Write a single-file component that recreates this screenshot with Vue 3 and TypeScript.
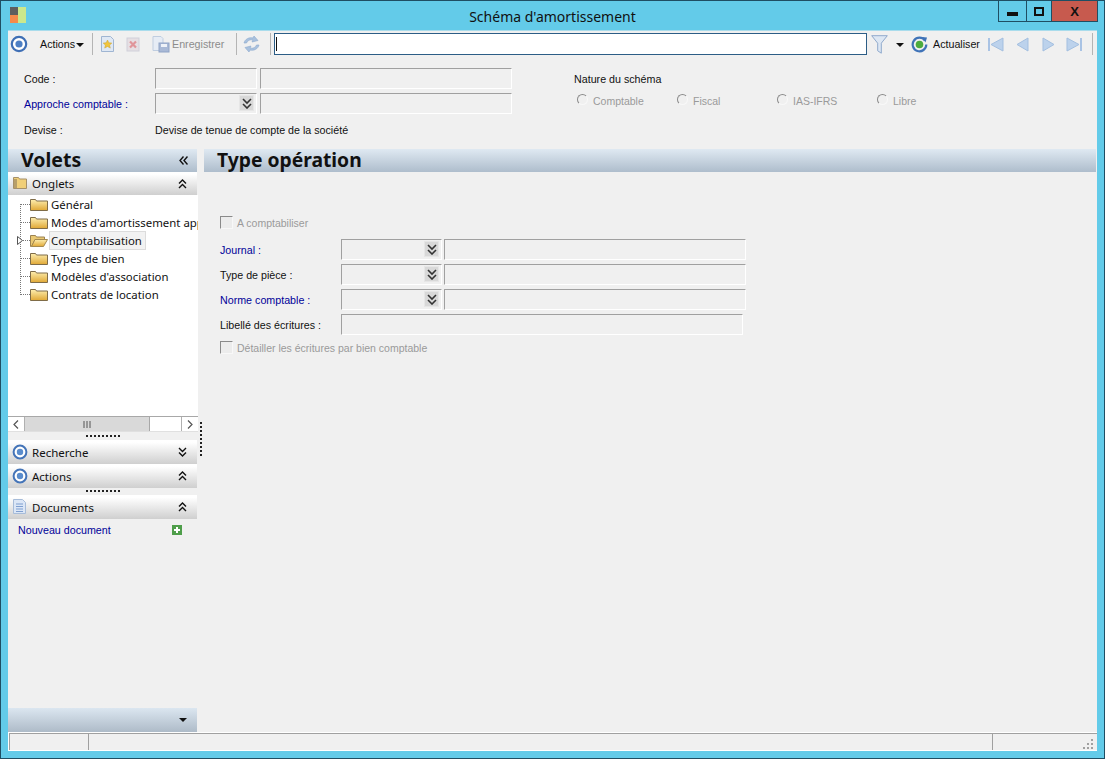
<script setup lang="ts">
const tree = [
  { label: "Général", open: false },
  { label: "Modes d'amortissement app", open: false },
  { label: "Comptabilisation", open: true },
  { label: "Types de bien", open: false },
  { label: "Modèles d'association", open: false },
  { label: "Contrats de location", open: false },
];
const radios = ["Comptable", "Fiscal", "IAS-IFRS", "Libre"];
const comboRows = [
  { label: "Journal :", link: true },
  { label: "Type de pièce :", link: false },
  { label: "Norme comptable :", link: true },
];
</script>

<template>
  <div class="window">
    <header class="titlebar">
      <svg class="logo" width="16" height="16" viewBox="0 0 16 16">
        <rect x="0" y="0" width="8" height="8" fill="#5e5e5e" />
        <rect x="0" y="8" width="8" height="8" fill="#f58a4b" />
        <rect x="8" y="0" width="8" height="16" fill="#cbe88c" />
      </svg>
      <h1 class="title">Schéma d'amortissement</h1>
      <div class="controls">
        <button class="ctl ctl-min"><span></span></button>
        <button class="ctl ctl-max"><span></span></button>
        <button class="ctl ctl-close">X</button>
      </div>
    </header>

    <div class="client">
      <div class="toolbar">
        <svg class="ring tb-ring" width="18" height="18" viewBox="0 0 18 18">
          <circle cx="9" cy="9" r="7.2" fill="#fff" stroke="#3f6fb5" stroke-width="2.2" />
          <circle cx="9" cy="9" r="3.6" fill="#4d7fc4" />
        </svg>
        <span class="tb-actions">Actions</span><i class="caret"></i>
        <i class="sep sep-a"></i>
        <svg class="tb-new" width="15" height="16" viewBox="0 0 15 16">
          <path d="M1.500 .5h9l3 3v12h-12z" fill="#dfe8f4" stroke="#9fb5d2" />
          <path d="M7.500 4l1.300 2.800 3 .3-2.200 2 .7 3-2.800-1.600-2.800 1.600.7-3-2.200-2 3-.3z" fill="#f2c53a" stroke="#c9a02e" stroke-width=".5" />
        </svg>
        <svg class="tb-del" width="14" height="15" viewBox="0 0 14 15">
          <rect x="1" y="1" width="12" height="13" fill="#e6dfe3" stroke="#cfd0da" />
          <path d="M4 4.500l6 6M10 4.500l-6 6" stroke="#e0959a" stroke-width="2.200" />
        </svg>
        <svg class="tb-save" width="18" height="17" viewBox="0 0 18 17">
          <path d="M1 .5h8l2 2v12H1z" fill="#e6ecf5" stroke="#bfcde0" />
          <rect x="7" y="7" width="10" height="9" fill="#a9b9d6" stroke="#8fa3c6" />
          <rect x="9" y="8" width="6" height="3" fill="#eef2f8" />
        </svg>
        <span class="tb-save-label">Enregistrer</span>
        <i class="sep sep-b"></i>
        <svg class="tb-sync" width="19" height="18" viewBox="0 0 19 18">
          <path d="M2 8c1-4 5-6 9-5l1-2 4 4.500-6 1.500 1-2c-3-.8-5.500 .5-6.500 3z" fill="#a9c1de" stroke="#8aa8cd" stroke-width=".6" />
          <path d="M17 10c-1 4-5 6-9 5l-1 2-4-4.500 6-1.500-1 2c3 .8 5.500-.5 6.500-3z" fill="#a9c1de" stroke="#8aa8cd" stroke-width=".6" />
        </svg>
        <i class="sep sep-c"></i>
        <div class="search"><i class="cursor"></i></div>
        <svg class="tb-filter" width="17" height="19" viewBox="0 0 17 19">
          <path d="M.7 .7h15.600l-6 7.500v10l-3.600-2.400V8.200z" fill="#dde7f3" stroke="#8fa9cc" />
        </svg>
        <i class="caret caret-filter"></i>
        <svg class="tb-refresh" width="17" height="17" viewBox="0 0 17 17">
          <path d="M14 4.500a6.800 6.800 0 1 0 1.300 4" fill="none" stroke="#3f73b8" stroke-width="2.200" />
          <path d="M11 1l5 .5-1.500 5z" fill="#3f73b8" />
          <circle cx="8.500" cy="8.500" r="3.800" fill="#4cab3e" />
        </svg>
        <span class="tb-refresh-label">Actualiser</span>
        <svg class="nav nav-first" width="16" height="15" viewBox="0 0 16 15">
          <path d="M1 1v13" stroke="#a9c3e4" stroke-width="2" />
          <path d="M15 1v13L3 7.500z" fill="#bcd2ec" stroke="#a3bfe0" />
        </svg>
        <svg class="nav nav-prev" width="13" height="15" viewBox="0 0 13 15">
          <path d="M12 1v13L1 7.500z" fill="#bcd2ec" stroke="#a3bfe0" />
        </svg>
        <svg class="nav nav-next" width="13" height="15" viewBox="0 0 13 15">
          <path d="M1 1v13l11-6.500z" fill="#bcd2ec" stroke="#a3bfe0" />
        </svg>
        <svg class="nav nav-last" width="16" height="15" viewBox="0 0 16 15">
          <path d="M15 1v13" stroke="#a9c3e4" stroke-width="2" />
          <path d="M1 1v13l12-6.500z" fill="#bcd2ec" stroke="#a3bfe0" />
        </svg>
        <i class="sep sep-d"></i>
      </div>

      <section class="head-form">
        <div class="head-left">
          <div class="row">
            <label class="head-label">Code :</label>
            <div class="field f-102"></div>
            <div class="field f-252"></div>
          </div>
          <div class="row">
            <label class="head-label link">Approche comptable :</label>
            <div class="field f-102 combo">
              <span class="chev-btn">
                <svg width="10" height="11" viewBox="0 0 10 11"><path d="M1 1l4 4 4-4M1 6l4 4 4-4" fill="none" stroke="#333" stroke-width="1.600" /></svg>
              </span>
            </div>
            <div class="field f-252"></div>
          </div>
          <div class="row row-text">
            <label class="head-label">Devise :</label>
            <span class="devise">Devise de tenue de compte de la société</span>
          </div>
        </div>
        <div class="nature">
          <div class="nature-title">Nature du schéma</div>
          <div class="radios">
            <span v-for="r in radios" :key="r" class="radio-item">
              <i class="radio"></i><span>{{ r }}</span>
            </span>
          </div>
        </div>
      </section>

      <div class="main">
        <aside class="side">
          <div class="volets">
            <span>Volets</span>
            <svg width="9" height="9" viewBox="0 0 9 9"><path d="M4.500 .5L1 4.500l3.500 4M8.500 .5L5 4.500l3.500 4" fill="none" stroke="#111" stroke-width="1.400" /></svg>
          </div>
          <div class="group-head gh-top">
            <svg class="gh-icon" width="14" height="13" viewBox="0 0 14 13"><path d="M.5 1.500h5l1 1.500h7v9.500H.5z" fill="#f0cf78" stroke="#a5906a" /><rect x="1" y="3" width="3" height="9" fill="#7d6f58" opacity=".5" /></svg>
            <span class="gh-label">Onglets</span>
            <svg class="gh-chev" width="9" height="10" viewBox="0 0 9 10"><path d="M1 4.500l3.500-3.500 3.500 3.500M1 9l3.500-3.500L8 9" fill="none" stroke="#111" stroke-width="1.400" /></svg>
          </div>
          <div class="tree">
            <div class="tree-body">
              <i class="tree-vline"></i>
              <div v-for="t in tree" :key="t.label" class="node">
                <i class="tree-hline"></i>
                <svg v-if="t.open" class="exp" width="6" height="9" viewBox="0 0 6 9"><path d="M.5 .5v8l5-4z" fill="#fff" stroke="#555" /></svg>
                <svg class="folder" width="18" height="13" viewBox="0 0 18 13">
                  <defs>
                    <linearGradient id="fold" x1="0" y1="0" x2="0" y2="1">
                      <stop offset="0" stop-color="#fdeeb0" />
                      <stop offset="1" stop-color="#e0a835" />
                    </linearGradient>
                  </defs>
                  <path v-if="t.open" d="M.5 1.500h5l1 1.500h8v2.500H5L1.500 12.500h-1z" fill="#e9c873" stroke="#9b8252" />
                  <path v-if="t.open" d="M5 5.500h12.500l-4 7h-12z" fill="url(#fold)" stroke="#a58a50" />
                  <path v-else d="M.5 1.500h5l1 1.500h11v9.500H.5z" fill="url(#fold)" stroke="#7f6c48" />
                </svg>
                <span class="node-label" :class="{ selected: t.open }">{{ t.label }}</span>
              </div>
            </div>
            <div class="hscroll">
              <span class="sb-btn">
                <svg width="6" height="9" viewBox="0 0 6 9"><path d="M5 .5L1 4.500l4 4" fill="none" stroke="#555" stroke-width="1.200" /></svg>
              </span>
              <span class="sb-thumb">
                <svg width="8" height="7" viewBox="0 0 8 7"><path d="M1 0v7M4 0v7M7 0v7" stroke="#555" /></svg>
              </span>
              <span class="sb-track"></span>
              <span class="sb-btn sb-end">
                <svg width="6" height="9" viewBox="0 0 6 9"><path d="M1 .5l4 4-4 4" fill="none" stroke="#555" stroke-width="1.200" /></svg>
              </span>
            </div>
          </div>
          <div class="grip"><i></i></div>
          <div class="group-head">
            <svg class="gh-icon ring-icon" width="16" height="16" viewBox="0 0 16 16"><circle cx="8" cy="8" r="6.400" fill="#fff" stroke="#4474b8" stroke-width="2" /><circle cx="8" cy="8" r="3.200" fill="#5a8ccc" /></svg>
            <span class="gh-label">Recherche</span>
            <svg class="gh-chev" width="9" height="10" viewBox="0 0 9 10"><path d="M1 1l3.500 3.500L8 1M1 5.500L4.500 9 8 5.500" fill="none" stroke="#111" stroke-width="1.400" /></svg>
          </div>
          <div class="group-head">
            <svg class="gh-icon ring-icon" width="16" height="16" viewBox="0 0 16 16"><circle cx="8" cy="8" r="6.400" fill="#fff" stroke="#4474b8" stroke-width="2" /><circle cx="8" cy="8" r="3.200" fill="#5a8ccc" /></svg>
            <span class="gh-label">Actions</span>
            <svg class="gh-chev" width="9" height="10" viewBox="0 0 9 10"><path d="M1 4.500l3.500-3.500 3.500 3.500M1 9l3.500-3.500L8 9" fill="none" stroke="#111" stroke-width="1.400" /></svg>
          </div>
          <div class="grip grip-b"><i></i></div>
          <div class="group-head">
            <svg class="gh-icon" width="13" height="15" viewBox="0 0 13 15"><path d="M.5 .5h9l3 3v11H.5z" fill="#dbe6f6" stroke="#a7bcd9" /><path d="M3 5h7M3 7.500h7M3 10h7M3 12.500h7" stroke="#7f9fd0" /></svg>
            <span class="gh-label">Documents</span>
            <svg class="gh-chev" width="9" height="10" viewBox="0 0 9 10"><path d="M1 4.500l3.500-3.500 3.500 3.500M1 9l3.500-3.500L8 9" fill="none" stroke="#111" stroke-width="1.400" /></svg>
          </div>
          <div class="doc-row">
            <span class="link">Nouveau document</span>
            <svg width="10" height="10" viewBox="0 0 10 10"><rect width="10" height="10" fill="#4f9e4a" /><path d="M5 2v6M2 5h6" stroke="#fff" stroke-width="2" /></svg>
          </div>
          <div class="spacer"></div>
          <div class="side-foot">
            <i class="caret"></i>
          </div>
        </aside>

        <div class="splitter"><i></i></div>

        <main class="content">
          <div class="content-head">Type opération</div>
          <div class="content-form">
            <div class="check-row first"><i class="check"></i><span>A comptabiliser</span></div>
            <div v-for="c in comboRows" :key="c.label" class="form-row">
              <label class="form-label" :class="{ link: c.link }">{{ c.label }}</label>
              <div class="field f-101 combo">
                <span class="chev-btn">
                  <svg width="10" height="11" viewBox="0 0 10 11"><path d="M1 1l4 4 4-4M1 6l4 4 4-4" fill="none" stroke="#333" stroke-width="1.600" /></svg>
                </span>
              </div>
              <div class="field f-302"></div>
            </div>
            <div class="form-row form-row-last">
              <label class="form-label">Libellé des écritures :</label>
              <div class="field f-402"></div>
            </div>
            <div class="check-row"><i class="check"></i><span>Détailler les écritures par bien comptable</span></div>
          </div>
        </main>
      </div>

      <footer class="status">
        <span class="cell c1"></span>
        <span class="cell c2"></span>
        <span class="cell c3">
          <svg width="12" height="12" viewBox="0 0 12 12" fill="#a0a0a0">
            <rect x="9" y="1" width="2" height="2" /><rect x="5" y="5" width="2" height="2" /><rect x="9" y="5" width="2" height="2" />
            <rect x="1" y="9" width="2" height="2" /><rect x="5" y="9" width="2" height="2" /><rect x="9" y="9" width="2" height="2" />
          </svg>
        </span>
      </footer>
    </div>
  </div>
</template>

<style scoped>
.window {
  width: 1105px;
  height: 759px;
  box-sizing: border-box;
  background: #63cbe9;
  border: 1px solid #1f4e63;
  padding: 0 7px 7px;
  display: flex;
  flex-direction: column;
  font-family: "Liberation Sans", Arial, sans-serif;
  font-size: 10.7px;
  color: #111;
  overflow: hidden;
}
.titlebar {
  height: 29px;
  flex: none;
  display: grid;
  grid-template-columns: 1fr auto 1fr;
  align-items: start;
}
.logo { margin: 6px 0 0 2px; }
.title {
  margin: 7px 0 0;
  font-family: "Noto Sans", sans-serif;
  font-size: 14px;
  line-height: 18px;
  font-weight: 400;
  color: #111;
}
.controls {
  justify-self: end;
  display: flex;
  height: 21px;
  margin-right: -1px;
  border: 1px solid #1f4e63;
  border-top: 0;
  box-sizing: border-box;
}
.ctl {
  border: 0;
  padding: 0;
  background: transparent;
  display: flex;
  align-items: center;
  justify-content: center;
  border-right: 1px solid #1f4e63;
}
.ctl-min { width: 28px; }
.ctl-min span { width: 11px; height: 4px; background: #111; margin-top: 5px; }
.ctl-max { width: 25px; }
.ctl-max span { border: 2px solid #111; width: 6px; height: 5px; }
.ctl-close {
  width: 45px;
  background: #c75a4e;
  border-right: 0;
  font-family: "Liberation Sans", sans-serif;
  font-weight: 700;
  font-size: 13px;
  color: #111;
}
.client {
  flex: 1;
  background: #f0f0f0;
  display: flex;
  flex-direction: column;
  min-height: 0;
  border-top: 1px solid #a9dcec;
}
.toolbar {
  height: 26px;
  flex: none;
  display: flex;
  align-items: center;
  white-space: nowrap;
}
.tb-ring { margin-left: 2px; flex: none; }
.tb-actions { margin-left: 12px; width: 35px; flex: none; }
.caret {
  width: 0;
  height: 0;
  border-left: 4px solid transparent;
  border-right: 4px solid transparent;
  border-top: 4px solid #111;
  display: inline-block;
  flex: none;
}
.tb-actions + .caret { margin-left: 1px; margin-top: 1px; }
.sep { width: 1px; height: 22px; background: #b4b4b4; flex: none; }
.sep-a { margin-left: 8px; }
.tb-new { margin-left: 7px; flex: none; }
.tb-del { margin-left: 11px; flex: none; }
.tb-save { margin-left: 12px; flex: none; }
.tb-save-label { margin-left: 2px; width: 54px; flex: none; color: #8c8c8c; }
.sep-b { margin-left: 10px; }
.tb-sync { margin-left: 5px; flex: none; }
.sep-c { margin-left: 9px; }
.search {
  width: 593px;
  height: 22px;
  box-sizing: border-box;
  border: 1px solid #2c5d86;
  background: #fff;
  margin-left: 3px;
  padding: 3px 1px;
  display: flex;
  flex: none;
}
.cursor { width: 1px; height: 14px; background: #111; }
.tb-filter { margin-left: 4px; flex: none; }
.caret-filter { margin-left: 8px; margin-top: 2px; }
.tb-refresh { margin-left: 7px; flex: none; }
.tb-refresh-label { margin-left: 5px; width: 47px; flex: none; }
.nav { flex: none; }
.nav-first { margin-left: 8px; }
.nav-prev { margin-left: 12px; }
.nav-next { margin-left: 13px; }
.nav-last { margin-left: 11px; }
.sep-d { margin-left: 10px; }

.head-form {
  height: 92px;
  flex: none;
  display: flex;
  box-sizing: border-box;
  padding-top: 11px;
}
.head-left { width: 566px; flex: none; display: flex; flex-direction: column; gap: 3px; }
.row { display: flex; height: 22px; }
.row-text { margin-top: 1px; align-items: center; }
.head-label { width: 131px; margin-left: 16px; line-height: 22px; flex: none; }
.link { color: #000099; }
.field {
  height: 21px;
  box-sizing: border-box;
  border: 1px solid;
  border-color: #a0a0a0 #fff #fff #a0a0a0;
  background: #f0f0f0;
  margin-right: 3px;
  flex: none;
  position: relative;
}
.f-101 { width: 101px; margin-right: 2px; }
.f-102 { width: 102px; }
.f-252 { width: 252px; }
.f-302 { width: 302px; }
.f-402 { width: 402px; }
.chev-btn {
  position: absolute;
  right: 2px;
  top: 1px;
  width: 15px;
  height: 16px;
  background: #d8d8d8;
  border: 1px solid #e6e6e6;
  box-sizing: border-box;
  display: flex;
  align-items: center;
  justify-content: center;
}
.devise { line-height: 21px; }
.nature { padding-top: 1px; }
.nature-title { line-height: 20px; }
.radios { display: flex; margin-top: 6px; }
.radio-item {
  width: 100px;
  display: flex;
  align-items: center;
  gap: 5px;
  color: #9a9a9a;
  font-size: 10.500px;
  margin-left: 3px;
  margin-right: -3px;
}
.radio {
  width: 9px;
  height: 9px;
  border-radius: 50%;
  border: 1px solid #8a8a8a;
  border-right-color: #f8f8f8;
  border-bottom-color: #f8f8f8;
  background: #f0f0f0;
  margin-top: -4px;
}

.main { flex: 1; display: flex; min-height: 0; }
.side { width: 189px; flex: none; display: flex; flex-direction: column; }
.volets {
  height: 23px;
  flex: none;
  background: linear-gradient(#dfe9f2, #aebdcc);
  display: flex;
  align-items: center;
  justify-content: space-between;
  padding: 0 9px 0 13px;
  font-family: "Noto Sans", sans-serif;
  font-size: 19.500px;
  font-weight: 700;
}
.volets span { margin-top: -3px; }
.group-head {
  height: 24px;
  flex: none;
  background: linear-gradient(#ffffff 10%, #cfcfcf);
  display: flex;
  align-items: center;
  position: relative;
  font-family: "Noto Sans", sans-serif;
  font-size: 11.500px;
}
.gh-top { height: 23px; }
.gh-icon { position: absolute; left: 5px; top: 4px; }
.ring-icon { left: 4px; }
.gh-label { margin-left: 24px; }
.gh-chev { margin-left: auto; margin-right: 10px; }
.tree { height: 237px; flex: none; background: #fff; margin-right: -1px; display: flex; flex-direction: column; }
.tree-body { flex: 1; position: relative; overflow: hidden; }
.tree-vline { position: absolute; left: 12px; top: 9px; height: 91px; border-left: 1px dotted #777; }
.node { height: 18px; position: relative; display: flex; align-items: center; padding-left: 22px; white-space: nowrap; font-family: "Noto Sans", sans-serif; font-size: 11.400px; }
.tree-hline { position: absolute; left: 12px; width: 10px; top: 9px; border-top: 1px dotted #777; }
.exp { position: absolute; left: 9px; top: 5px; }
.folder { flex: none; }
.node-label { margin-left: 2px; padding: 0 3px 0 1px; line-height: 17px; }
.node-label.selected { background: #f2f2f2; outline: 1px solid #dcdcdc; }
.hscroll { height: 16px; flex: none; display: flex; background: #fff; border-top: 1px solid #a8a8a8; border-bottom: 1px solid #e0e0e0; box-sizing: border-box; }
.sb-btn { width: 17px; display: flex; align-items: center; justify-content: center; border-right: 1px solid #b0b0b0; box-sizing: border-box; }
.sb-end { border-right: 0; border-left: 1px solid #b0b0b0; }
.sb-thumb { width: 125px; background: #d9d9d9; border-right: 1px solid #a8a8a8; display: flex; align-items: center; justify-content: center; box-sizing: border-box; }
.sb-track { flex: 1; }
.grip { height: 8px; flex: none; display: flex; justify-content: center; padding-top: 3px; box-sizing: border-box; }
.grip-b { height: 7px; padding-top: 2px; }
.grip i { width: 34px; height: 2px; background-image: linear-gradient(90deg, #222 50%, transparent 50%); background-size: 4px 2px; }
.doc-row {
  height: 21px;
  flex: none;
  display: flex;
  align-items: center;
  justify-content: space-between;
  padding: 0 15px 0 10px;
}
.spacer { flex: 1; }
.side-foot {
  height: 24px;
  flex: none;
  background: linear-gradient(#dbe6f0, #aebbc8);
  display: flex;
  align-items: center;
  justify-content: flex-end;
  padding-right: 10px;
}
.splitter { width: 7px; flex: none; position: relative; }
.splitter i { position: absolute; left: 3px; top: 273px; width: 2px; height: 36px; background-image: linear-gradient(#222 50%, transparent 50%); background-size: 2px 4px; }
.content { flex: 1; display: flex; flex-direction: column; min-width: 0; margin-right: 1px; }
.content-head {
  height: 23px;
  flex: none;
  background: linear-gradient(#dfe9f2, #aebdcc);
  padding-left: 13px;
  font-family: "Noto Sans", sans-serif;
  font-size: 19.300px;
  font-weight: 700;
  line-height: 22px;
}
.content-form { padding: 40px 0 0 16px; display: flex; flex-direction: column; }
.check-row { display: flex; align-items: center; height: 21px; color: #9a9a9a; gap: 4px; font-size: 10.500px; }
.check-row.first { margin-bottom: 6px; }
.check {
  width: 11px;
  height: 11px;
  border: 1px solid;
  border-color: #8a8a8a #f8f8f8 #f8f8f8 #8a8a8a;
  background: #ececec;
  flex: none;
}
.form-row { display: flex; height: 25px; flex: none; }
.form-row-last { height: 23px; }
.form-label { width: 121px; flex: none; line-height: 22px; }

.status {
  height: 19px;
  flex: none;
  display: flex;
  box-sizing: border-box;
  border-top: 1px solid #fff;
  border-bottom: 1px solid #fff;
  border-left: 1px solid #fff;
}
.cell {
  border-top: 1px solid #a0a0a0;
  border-left: 1px solid #a0a0a0;
  box-sizing: border-box;
}
.c1 { width: 79px; flex: none; }
.c2 { flex: 1; }
.c3 { width: 105px; flex: none; display: flex; justify-content: flex-end; align-items: flex-end; padding-right: 3px; }
</style>

<style>
html, body { margin: 0; padding: 0; overflow: hidden; background: #63cbe9; }
</style>
